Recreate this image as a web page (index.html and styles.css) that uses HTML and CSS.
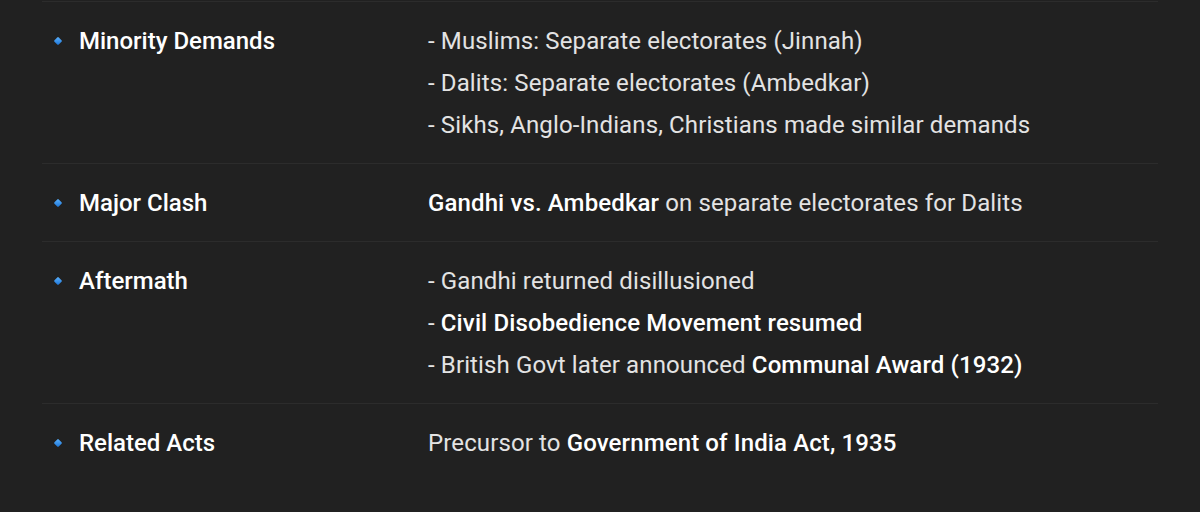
FILE: index.html
```html
<!DOCTYPE html>
<html>
<head>
<meta charset="utf-8">
<link rel="stylesheet" href="styles.css">
</head>
<body>
<div class="table">
  <div class="row">
    <div class="label"><span class="dot"></span>Minority Demands</div>
    <div class="value">
      <div class="line">- Muslims: Separate electorates (Jinnah)</div>
      <div class="line">- Dalits: Separate electorates (Ambedkar)</div>
      <div class="line">- Sikhs, Anglo-Indians, Christians made similar demands</div>
    </div>
  </div>
  <div class="row">
    <div class="label"><span class="dot"></span>Major Clash</div>
    <div class="value">
      <div class="line"><strong>Gandhi vs. Ambedkar</strong> on separate electorates for Dalits</div>
    </div>
  </div>
  <div class="row">
    <div class="label"><span class="dot"></span>Aftermath</div>
    <div class="value">
      <div class="line">- Gandhi returned disillusioned</div>
      <div class="line">- <strong>Civil Disobedience Movement resumed</strong></div>
      <div class="line">- British Govt later announced <strong>Communal Award (1932)</strong></div>
    </div>
  </div>
  <div class="row last">
    <div class="label"><span class="dot"></span>Related Acts</div>
    <div class="value">
      <div class="line">Precursor to <strong>Government of India Act, 1935</strong></div>
    </div>
  </div>
</div>
</body>
</html>
```

FILE: styles.css
```css
html, body {
  margin: 0;
  padding: 0;
  background: #212121;
  height: 100%;
}
body {
  font-family: Roboto, "Liberation Sans", sans-serif;
  font-size: 24px;
  color: #e3e3e3;
  overflow: hidden;
  padding-top: 1px;
  box-sizing: border-box;
}
.table {
  margin: 0 42px;
  border-top: 1px solid #2c2c2c;
}
.row {
  display: grid;
  grid-template-columns: 374px 1fr;
  padding: 18px 0 17px;
  border-bottom: 1px solid #2c2c2c;
}
.row.last {
  border-bottom: none;
}
.label {
  display: flex;
  align-items: flex-start;
  line-height: 42px;
  height: 42px;
  font-weight: 500;
  color: #ffffff;
  padding-left: 12px;
}
.dot {
  width: 6px;
  height: 6px;
  margin: 18px 18px 0 1px;
  transform: rotate(45deg);
  background: linear-gradient(135deg, #5cb3ff, #1a73d6);
  border-radius: 1px;
  flex: none;
}
.value {
  padding-left: 12px;
  font-weight: 400;
  letter-spacing: 0.12px;
}
.line {
  line-height: 42px;
  white-space: nowrap;
}
strong {
  font-weight: 500;
  color: #ffffff;
}
```
